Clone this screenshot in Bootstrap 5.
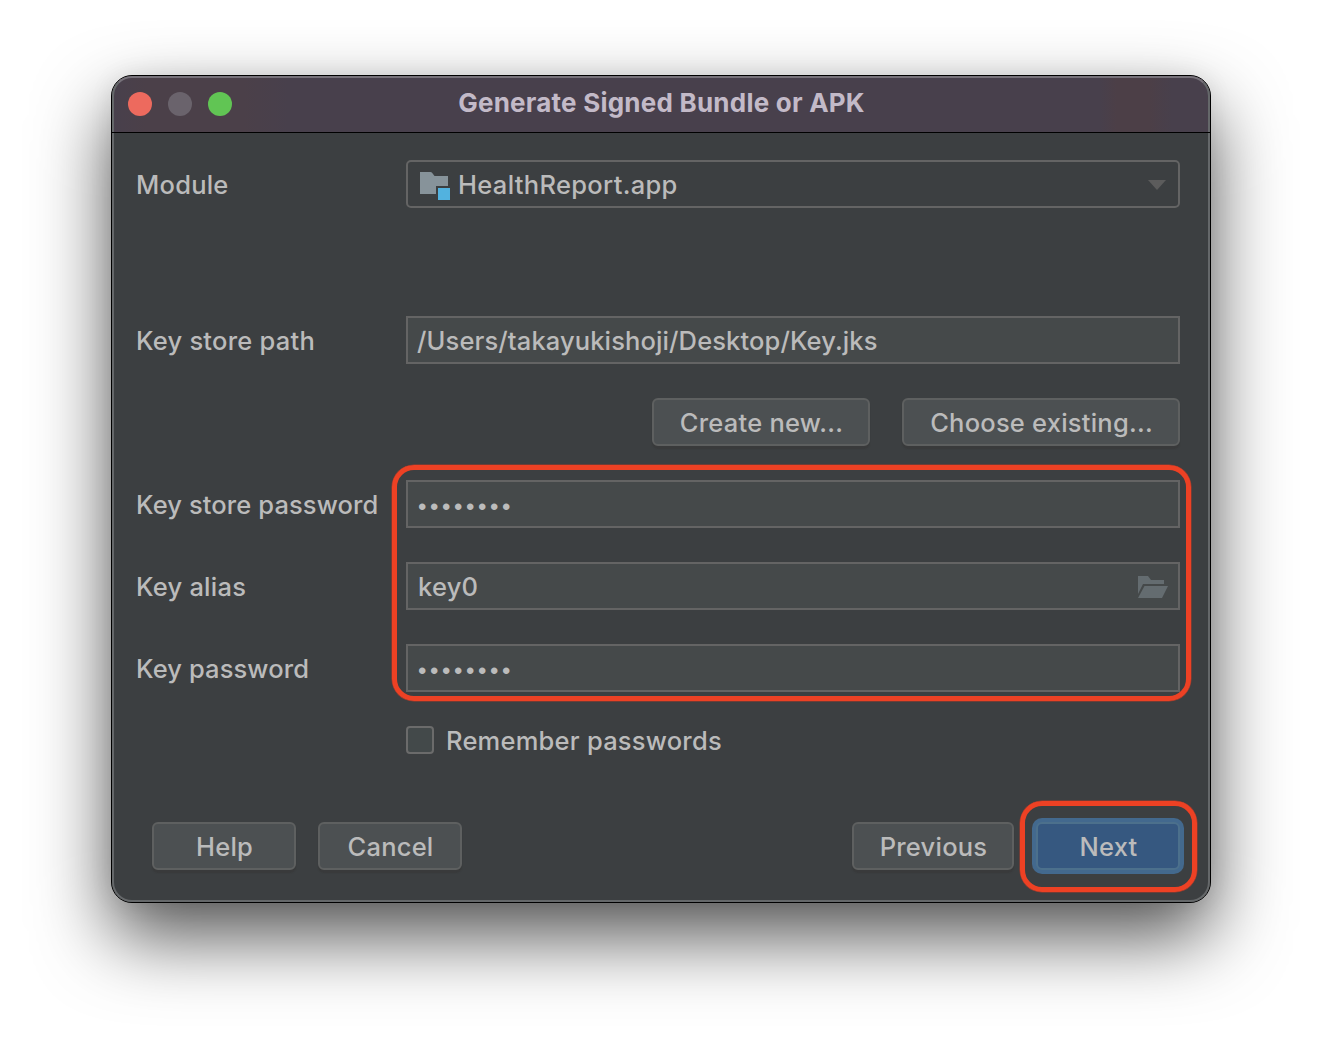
<!DOCTYPE html>
<html lang="en">
<head>
<meta charset="utf-8">
<meta name="viewport" content="width=device-width, initial-scale=1">
<title>Generate Signed Bundle or APK</title>
<link rel="stylesheet" href="https://cdn.jsdelivr.net/npm/bootstrap@5.3.0/dist/css/bootstrap.min.css">
<style>
body { background: #fff; min-height: 1050px; font-family: Inter, "Liberation Sans", sans-serif; font-size: 25.5px; font-weight: 450; line-height: 30px; letter-spacing: .23px; color: #bbb; padding: 75px 111px 0; overflow: hidden; }
.dialog { width: 1100px; height: 828px; border: 1px solid #000; border-radius: 21px; background: #3c3f41; box-shadow: 0 34px 74px rgba(0,0,0,.67), 0 0 24px rgba(0,0,0,.07); }
.rim { inset: 0; border: 2px solid #65686a; border-top-color: #77727a; border-radius: 20px; pointer-events: none; z-index: 3; }
.rim::after { content: ""; position: absolute; left: -2px; right: -2px; top: 54px; height: 1px; background: #000; }
.titlebar { height: 57px; padding: 0 16px; border-bottom: 1px solid #000; border-radius: 20px 20px 0 0; background: linear-gradient(90deg, #48404c 0, #4b4049 3%, #4b4049 12%, #48404c 16%, #48404c 90%, #4c3f47 91.5%, #4c3f47 94.5%, #48404c 96.5%); }
.lights { width: 120px; gap: 16px; }
.light { width: 24px; height: 24px; border-radius: 50%; background: #6a636c; }
.light-close { background: #ed6a5e; }
.light-zoom { background: #61c554; }
.caption { font-weight: 700; font-size: 26px; letter-spacing: .23px; color: #c3bac8; padding-right: 119px; padding-bottom: 2px; }
.pane { padding: 27px 30px 0 24px; }
.form-line { height: 48px; margin-bottom: 34px; }
.module-line { margin-bottom: 108px; }
.lbl { width: 270px; padding-top: 2px; white-space: nowrap; }
.tight { letter-spacing: .11px; }
.fld { height: 48px; border: 2px solid #646464; background: #45494a; padding: 2px 10px 0; }
.path-fld { letter-spacing: .12px; padding-left: 9px; }
.combo { background: #3c3f41; border-radius: 5px; padding: 0 12px 0 11px; }
.combo svg { margin-top: 1px; }
.combo-text { letter-spacing: .32px; padding: 2px 0 0 7px; }
.dots { font-family: "Liberation Sans", sans-serif; font-size: 24px; font-weight: 400; letter-spacing: 3.6px; padding-top: 3px; }
.key { height: 48px; border: 2px solid #5e6060; border-radius: 6px; background: #4c5052; color: #bbb; font-size: inherit; font-weight: inherit; letter-spacing: inherit; line-height: 30px; padding: 2px 0 0 1px; box-shadow: 0 3px 1px rgba(54,54,54,.5); }
.primary-key { background: #365880; border-color: #4c708c; box-shadow: 0 0 0 4px #43698e; }
.w-new { width: 218px; } .w-choose { width: 278px; } .w-std { width: 144px; } .w-prev { width: 162px; }
.gap-top { gap: 32px; } .gap-foot { gap: 22px; }
.tick { width: 28px; height: 28px; border: 2px solid #6b6b6b; border-radius: 4px; background-color: #43494a; margin-left: 270px; }
.tick-text { padding-top: 2px; }
.callout { border: 5px solid #ed4124; box-shadow: 0 0 0 .5px #a83a2a; border-radius: 22px; z-index: 4; pointer-events: none; }
.callout-fields { left: 280px; top: 389px; width: 799px; height: 236px; }
.callout-next { left: 908px; top: 725px; width: 177px; height: 91px; }
.tick-line { height: 28px; gap: 12px; margin-bottom: 68px; }
.foot { padding-left: 16px; }
</style>
</head>
<body>
<main class="dialog position-relative">
  <div class="rim position-absolute"></div>
  <header class="titlebar d-flex align-items-center">
    <div class="lights d-flex"><span class="light light-close"></span><span class="light"></span><span class="light light-zoom"></span></div>
    <div class="caption flex-grow-1 text-center">Generate Signed Bundle or APK</div>
  </header>
  <div class="pane">
    <div class="form-line module-line d-flex align-items-center">
      <div class="lbl">Module</div>
      <div class="fld combo flex-grow-1 d-flex align-items-center">
        <svg width="32" height="30" viewBox="0 0 32 30"><path fill="#87939a" d="M1 2h10.500q1.500 0 2.500 2l1.500 2H29v10H17v8H1z"/><path fill="#52b2df" d="M19 18h12v12H19z"/></svg>
        <span class="combo-text flex-grow-1">HealthReport.app</span>
        <svg width="18" height="10" viewBox="0 0 18 10"><path fill="#5c5c5c" d="M0 0h18L9 10z"/></svg>
      </div>
    </div>
    <div class="form-line d-flex align-items-center">
      <div class="lbl">Key store path</div>
      <div class="fld path-fld flex-grow-1 d-flex align-items-center">/Users/takayukishoji/Desktop/Key.jks</div>
    </div>
    <div class="form-line gap-top d-flex justify-content-end">
      <button type="button" class="btn key w-new">Create new...</button>
      <button type="button" class="btn key w-choose">Choose existing...</button>
    </div>
    <div class="form-line d-flex align-items-center">
      <div class="lbl tight">Key store password</div>
      <div class="fld flex-grow-1 d-flex align-items-center"><span class="dots">••••••••</span></div>
    </div>
    <div class="form-line d-flex align-items-center">
      <div class="lbl">Key alias</div>
      <div class="fld flex-grow-1 d-flex align-items-center justify-content-between">key0
        <svg width="30" height="22" viewBox="0 0 30 22"><path fill="#646c70" d="M0 0h10l3 4h13v4H5L0 18z"/><path fill="#646c70" d="M6.500 10H30l-6 12H0z"/></svg>
      </div>
    </div>
    <div class="form-line d-flex align-items-center">
      <div class="lbl tight">Key password</div>
      <div class="fld flex-grow-1 d-flex align-items-center"><span class="dots">••••••••</span></div>
    </div>
    <div class="tick-line d-flex align-items-center">
      <span class="tick"></span><span class="tick-text">Remember passwords</span>
    </div>
    <footer class="foot gap-foot d-flex">
      <button type="button" class="btn key w-std">Help</button>
      <button type="button" class="btn key w-std">Cancel</button>
      <button type="button" class="btn key w-prev ms-auto">Previous</button>
      <button type="button" class="btn key primary-key w-std">Next</button>
    </footer>
  </div>
  <div class="callout callout-fields position-absolute"></div>
  <div class="callout callout-next position-absolute"></div>
</main>
<script src="https://cdn.jsdelivr.net/npm/bootstrap@5.3.0/dist/js/bootstrap.bundle.min.js"></script>
</body>
</html>
